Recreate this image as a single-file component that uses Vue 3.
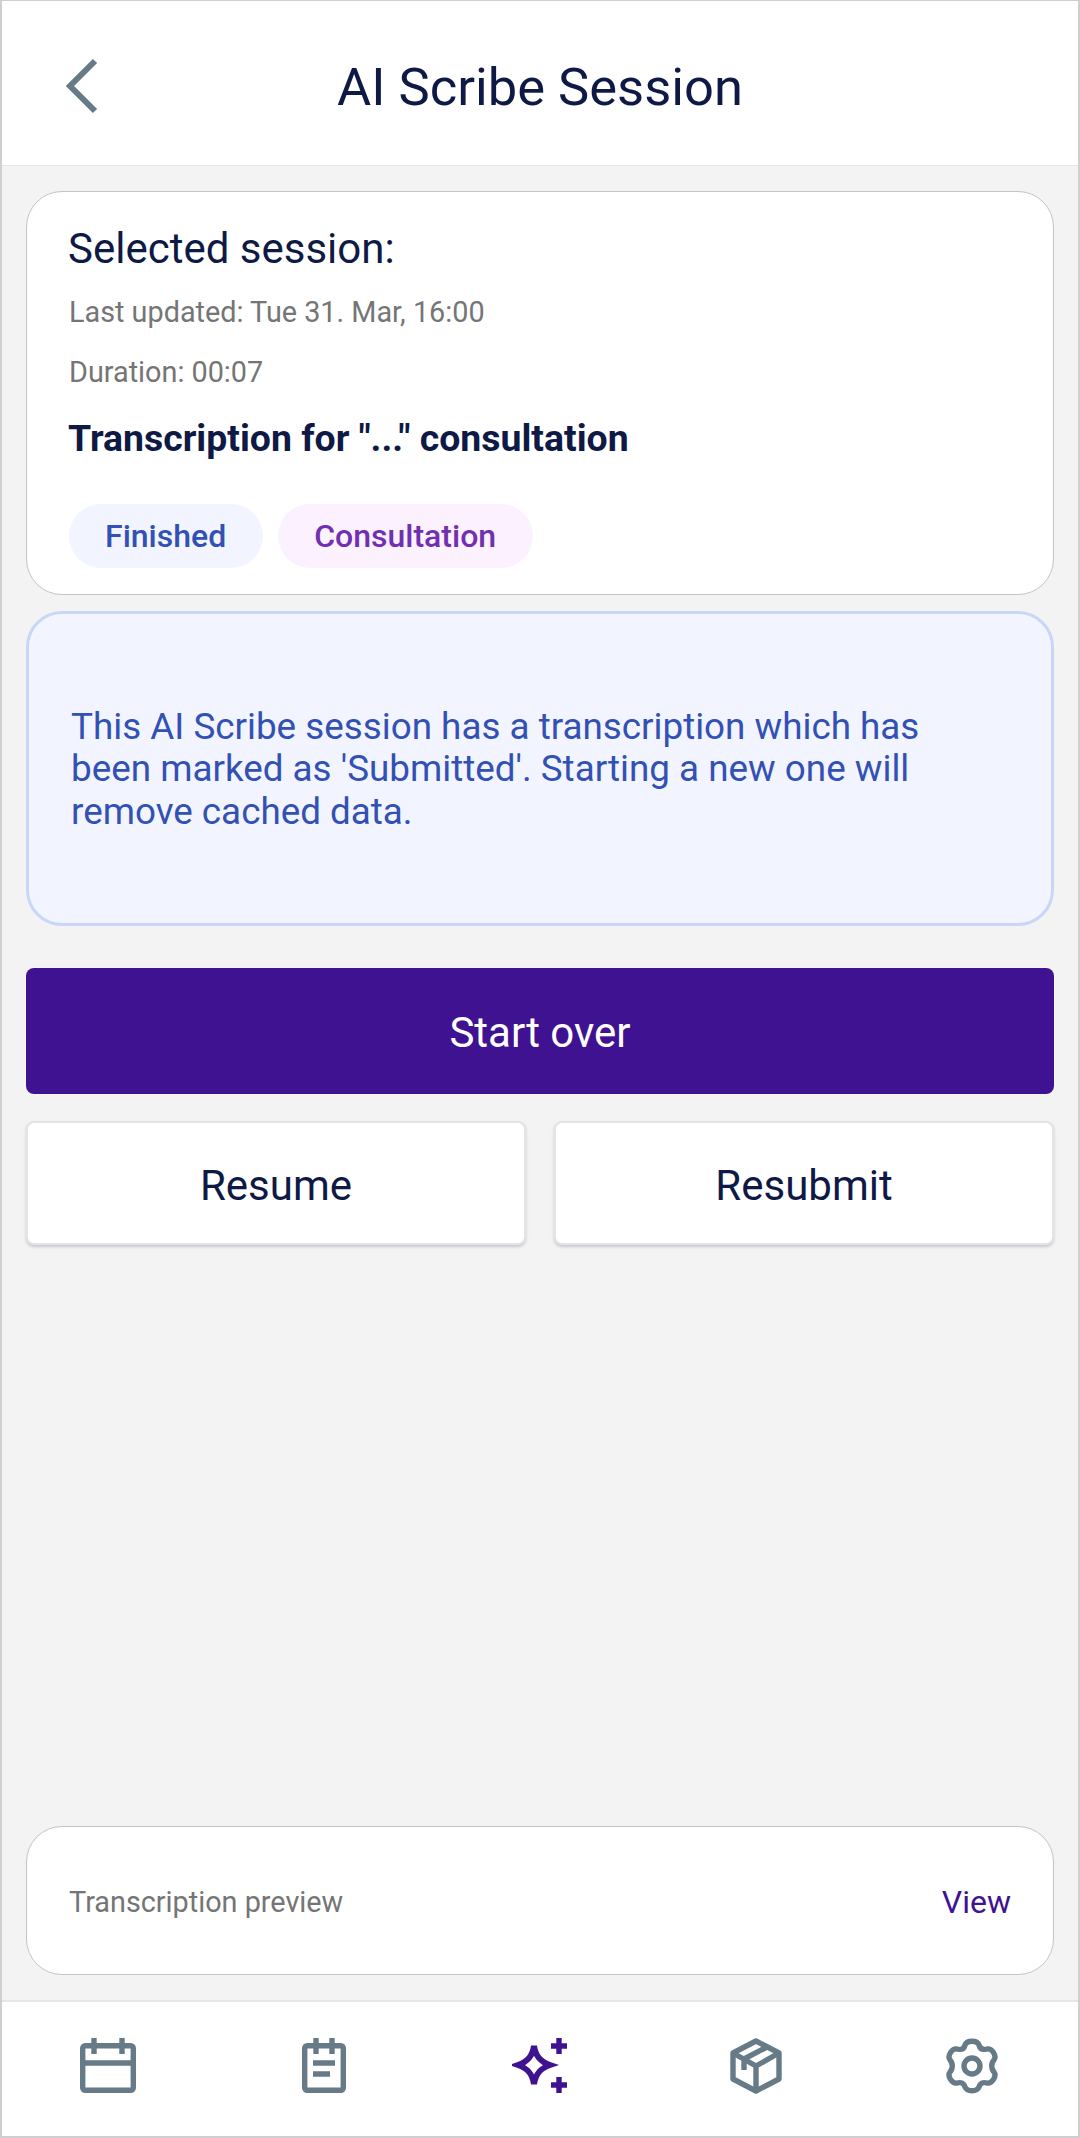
<script setup>
const navItems = ['calendar', 'notes', 'scribe', 'box', 'settings']
</script>

<template>
  <div class="screen">
    <header class="top-bar">
      <button class="back" aria-label="Back">
        <svg width="36" height="56" viewBox="0 0 36 56" fill="none" stroke="#667a88" stroke-width="6">
          <path d="M31 3 L6 28 L31 53" />
        </svg>
      </button>
      <h1 class="title">AI Scribe Session</h1>
    </header>

    <main class="content">
      <section class="card session">
        <h2 class="session-label">Selected session:</h2>
        <p class="meta">Last updated: Tue 31. Mar, 16:00</p>
        <p class="meta">Duration: 00:07</p>
        <p class="session-name">Transcription for "..." consultation</p>
        <div class="tags">
          <span class="tag tag-blue">Finished</span>
          <span class="tag tag-purple">Consultation</span>
        </div>
      </section>

      <section class="notice">
        This AI Scribe session has a transcription which has been marked as 'Submitted'. Starting a new one will remove cached data.
      </section>

      <button class="btn btn-primary">Start over</button>
      <div class="btn-row">
        <button class="btn btn-secondary">Resume</button>
        <button class="btn btn-secondary">Resubmit</button>
      </div>

      <section class="card preview">
        <span class="preview-label">Transcription preview</span>
        <span class="preview-link">View</span>
      </section>
    </main>

    <nav class="bottom-nav">
      <div v-for="item in navItems" :key="item" class="nav-item">
        <svg v-if="item === 'calendar'" width="56" height="56" viewBox="0 0 56 56" fill="none" stroke="#667a88" stroke-width="5.400">
          <rect x="2.700" y="7.700" width="50.600" height="44.600" rx="2.500" />
          <path d="M3 25H53M14 0V16M42 0V16" />
        </svg>
        <svg v-else-if="item === 'notes'" width="44" height="56" viewBox="0 0 44 56" fill="none" stroke="#667a88" stroke-width="5.400">
          <rect x="2.700" y="7.700" width="38.600" height="44.600" rx="2.500" />
          <path d="M14 0V16M30 0V16M11 25H33M11 36H28" />
        </svg>
        <svg v-else-if="item === 'scribe'" width="56" height="56" viewBox="0 0 56 56" fill="none" stroke="#3f1291" stroke-width="6">
          <path d="M22 8 C23.500 18 28 23.500 38 27 C28 30.500 23.500 36 22 46 C20.500 36 16 30.500 6 27 C16 23.500 20.500 18 22 8 Z" />
          <path stroke-width="5.400" d="M47 0V16M39 8H55M47 39V55M39 47H55" />
        </svg>
        <svg v-else-if="item === 'box'" width="52" height="56" viewBox="0 0 52 56" fill="none" stroke="#667a88" stroke-width="5.400" stroke-linejoin="round">
          <path d="M26 3 L49 15 V41 L26 53 L3 41 V15 Z" />
          <path d="M3 15 L26 28 L49 15M26 28V53M37 9 L14 21V32" />
        </svg>
        <svg v-else width="54" height="56" viewBox="0 0 54 56" fill="none" stroke="#667a88" stroke-width="5.400" stroke-linejoin="round">
          <path d="M20 7 C22 2 32 2 34 7 C35 11 38 12 42 11 C47 10 52 18 49 22 C46 25 46 31 49 34 C52 38 47 46 42 45 C38 44 35 45 34 49 C32 54 22 54 20 49 C19 45 16 44 12 45 C7 46 2 38 5 34 C8 31 8 25 5 22 C2 18 7 10 12 11 C16 12 19 11 20 7 Z" />
          <circle cx="27" cy="28" r="8" />
        </svg>
      </div>
    </nav>
  </div>
</template>

<style scoped>
.screen {
  box-sizing: border-box;
  width: 1080px;
  height: 2138px;
  display: flex;
  flex-direction: column;
  background: #f3f3f3;
  border: 2px solid #cfcfcf;
  border-top-width: 1px;
  font-family: Roboto, "Liberation Sans", sans-serif;
  color: #0e1a45;
}

.top-bar {
  position: relative;
  box-sizing: border-box;
  flex: none;
  height: 165px;
  padding-top: 7px;
  display: flex;
  align-items: center;
  justify-content: center;
  background: #fff;
  border-bottom: 1px solid #e6e6e6;
}

.back {
  position: absolute;
  left: 62px;
  top: 57px;
  padding: 0;
  border: 0;
  background: none;
  line-height: 0;
}

.title {
  margin: 0;
  font-size: 52.500px;
  font-weight: 400;
  line-height: 60px;
}

.content {
  flex: 1;
  display: flex;
  flex-direction: column;
  padding: 25px 24px;
}

.card {
  box-sizing: border-box;
  background: #fff;
  border: 1px solid #c4c4c4;
  border-radius: 36px;
}

.session {
  height: 404px;
  padding: 31px 41px 0;
}

.session-label {
  margin: 0;
  font-size: 42px;
  font-weight: 400;
  line-height: 52px;
}

.meta {
  margin: 15px 0 0 1px;
  font-size: 28.800px;
  line-height: 44px;
  color: #757575;
}

.meta + .meta {
  margin-top: 16px;
}

.session-name {
  margin: 20px 0 0;
  font-size: 37.400px;
  font-weight: 700;
  line-height: 48px;
}

.tags {
  display: flex;
  gap: 15px;
  margin: 42px 0 0 1px;
}

.tag {
  height: 64px;
  display: flex;
  align-items: center;
  padding: 0 37px 0 36px;
  border-radius: 32px;
  font-size: 32px;
  font-weight: 500;
}

.tag-blue {
  background: #f2f5ff;
  color: #3350b4;
}

.tag-purple {
  background: #fbf1ff;
  color: #7030b0;
}

.notice {
  box-sizing: border-box;
  height: 315px;
  margin-top: 16px;
  padding: 2px 60px 0 42px;
  display: flex;
  align-items: center;
  background: #f2f5ff;
  border: 3px solid #c8d6f8;
  border-radius: 36px;
  color: #3350b4;
  font-size: 36.800px;
  line-height: 42.500px;
}

.btn {
  font-family: inherit;
  font-size: 42px;
  padding: 3px 0 0;
  border-radius: 8px;
}

.btn-primary {
  height: 126px;
  margin-top: 42px;
  border: 0;
  background: #3f1291;
  color: #fff;
}

.btn-row {
  display: grid;
  grid-template-columns: 1fr 1fr;
  gap: 28px;
  margin-top: 27px;
}

.btn-secondary {
  height: 124px;
  padding-top: 5px;
  border: 2px solid #e4e4e4;
  background: #fff;
  color: #0e1a45;
  box-shadow: 0 2px 3px rgba(120, 125, 150, 0.35);
}

.preview {
  height: 149px;
  margin-top: auto;
  padding: 2px 42px 0;
  display: flex;
  align-items: center;
  justify-content: space-between;
  font-size: 28.800px;
}

.preview-label {
  color: #757575;
}

.preview-link {
  font-size: 32px;
  color: #3f1291;
}

.bottom-nav {
  box-sizing: border-box;
  flex: none;
  height: 136px;
  padding-bottom: 7px;
  display: grid;
  grid-template-columns: repeat(5, 216px);
  justify-content: center;
  background: #fff;
  border-top: 2px solid #e6e6e6;
}

.nav-item {
  display: flex;
  align-items: center;
  justify-content: center;
}
</style>

<style>
html, body {
  margin: 0;
  background: #fff;
}
</style>
